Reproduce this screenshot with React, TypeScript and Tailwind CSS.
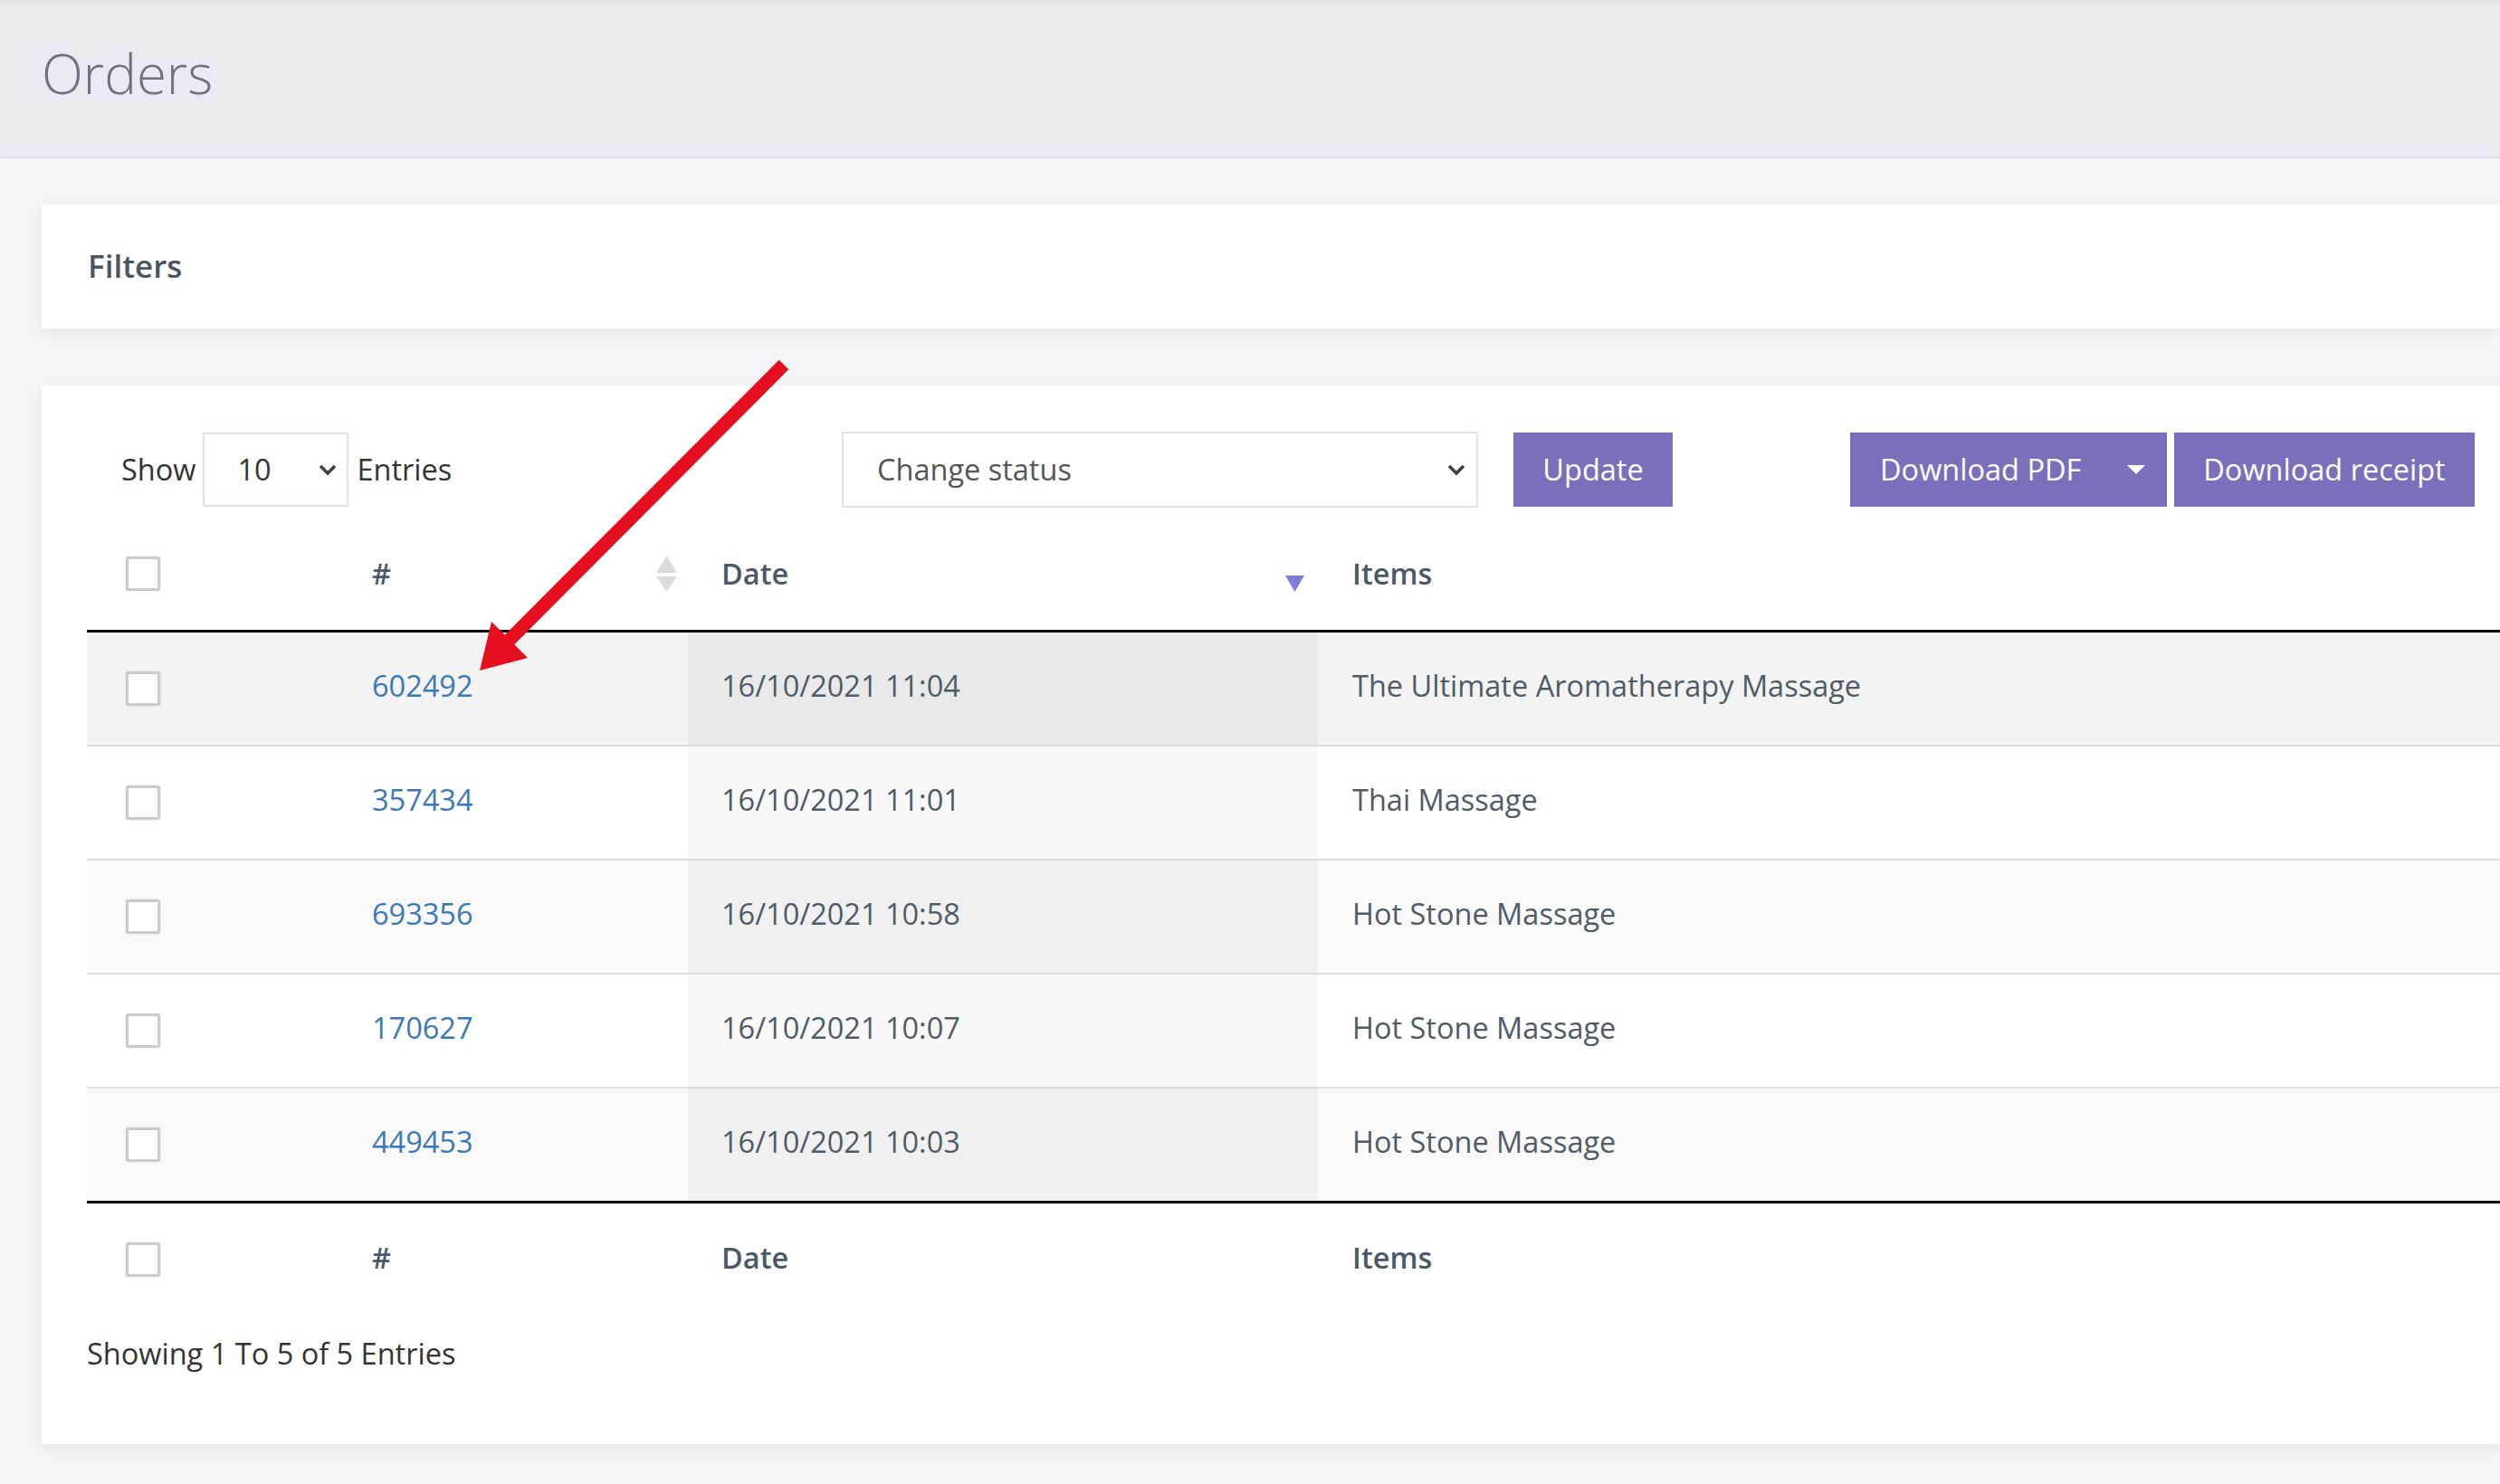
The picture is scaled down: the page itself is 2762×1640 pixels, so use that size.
import * as React from "react";

const rows = [
  { id: "602492", date: "16/10/2021 11:04", item: "The Ultimate Aromatherapy Massage", bg: "bg-[#f3f3f3]", dateBg: "bg-[#e9e9e9]" },
  { id: "357434", date: "16/10/2021 11:01", item: "Thai Massage", bg: "bg-white", dateBg: "bg-[#f8f8f8]" },
  { id: "693356", date: "16/10/2021 10:58", item: "Hot Stone Massage", bg: "bg-[#f9f9f9]", dateBg: "bg-[#f0f0f0]" },
  { id: "170627", date: "16/10/2021 10:07", item: "Hot Stone Massage", bg: "bg-white", dateBg: "bg-[#f8f8f8]" },
  { id: "449453", date: "16/10/2021 10:03", item: "Hot Stone Massage", bg: "bg-[#f9f9f9]", dateBg: "bg-[#f0f0f0]" },
];

const Checkbox = () => (
  <span className="block h-[38px] w-[38px] rounded-[3px] border-[3px] border-[#cbcbcb] bg-white shadow-[0_0_2px_rgba(0,0,0,0.18)]" />
);

const Chevron = () => (
  <svg width="22" height="14" viewBox="0 0 22 14">
    <polyline points="3,3 11,11 19,3" fill="none" stroke="#3f3f3f" strokeWidth="3.5" />
  </svg>
);

const SortBoth = () => (
  <svg width="23" height="40" viewBox="0 0 23 40">
    <path d="M11.5 0 L23 19 H0 Z" fill="#dcdcdc" />
    <path d="M0 23 H23 L11.5 40 Z" fill="#dcdcdc" />
  </svg>
);

const SortDesc = () => (
  <svg width="23" height="40" viewBox="0 0 23 40">
    <path d="M0 22 H21 L10.5 40 Z" fill="#7c7dd8" />
  </svg>
);

const cols = "grid grid-cols-[278px_386px_696px_1fr]";

export default function App() {
  return (
    <div className="relative h-[1640px] w-[2762px] overflow-hidden bg-[#f2f4f8] font-['Open_Sans',sans-serif]">
      {/* page header */}
      <div className="flex h-[175px] items-center border-b-2 border-[#dde1e7] bg-[#e8ebf0] pb-[12px] pl-[46px] shadow-[inset_0_3px_3px_rgba(0,0,0,0.04)]">
        <h1 className="text-[60px] font-light leading-none text-[#6e7379]">Orders</h1>
      </div>

      {/* filters */}
      <div className="ml-[46px] mt-[51px] flex h-[137px] items-center bg-white pl-[51px] shadow-[0_4px_14px_rgba(0,0,0,0.06)]">
        <span className="text-[35px] font-semibold text-[#4a5561]">Filters</span>
      </div>

      {/* orders table */}
      <div className="ml-[46px] mt-[63px] h-[1170px] bg-white pt-[51px] shadow-[0_4px_14px_rgba(0,0,0,0.06)]">
        <div className="flex h-[84px] items-center pl-[88px] text-[32.5px] text-[#333333]">
          <div className="flex w-[796px] items-center">
            <span>Show</span>
            <div className="ml-[7px] flex h-[82px] w-[161px] items-center justify-between border-2 border-[#dde3e5] pl-[37px] pr-[10px]">
              <span>10</span>
              <Chevron />
            </div>
            <span className="ml-[10px]">Entries</span>
          </div>
          <div className="flex h-[84px] w-[703px] items-center justify-between border-2 border-[#dde3e5] pl-[37px] pr-[11px] text-[#555555]">
            <span>Change status</span>
            <Chevron />
          </div>
          <button className="ml-[39px] h-[82px] w-[176px] bg-[#7b6fbc] text-white">Update</button>
          <button className="ml-[196px] flex h-[82px] w-[350px] items-center bg-[#7b6fbc] pl-[33px] pr-[24px] text-white">
            <span>Download PDF</span>
            <svg className="ml-auto" width="20" height="10" viewBox="0 0 20 10">
              <path d="M0 0 H20 L10 10 Z" fill="#ffffff" />
            </svg>
          </button>
          <button className="ml-[8px] h-[82px] w-[332px] bg-[#7b6fbc] text-white">Download receipt</button>
        </div>

        <div className="ml-[50px] mt-[11px] text-[32.5px]">
          {/* head */}
          <div className={`${cols} h-[127px] border-b-[3px] border-black font-semibold text-[#4b5867]`}>
            <div className="flex items-center pl-[43px]">
              <Checkbox />
            </div>
            <div className="flex items-center justify-between pl-[37px] pr-[12px]">
              <span>#</span>
              <SortBoth />
            </div>
            <div className="flex items-center justify-between pl-[37px] pr-[13px]">
              <span>Date</span>
              <SortDesc />
            </div>
            <div className="flex items-center pl-[38px]">
              <span>Items</span>
            </div>
          </div>

          {/* body */}
          {rows.map((r, i) => (
            <div
              key={r.id}
              className={`${cols} ${r.bg} ${i > 0 ? "h-[126px] border-t-2 border-[#dddddd]" : "h-[124px]"} text-[#4f5b67]`}
            >
              <div className="flex items-center pl-[43px]">
                <Checkbox />
              </div>
              <div className="flex items-center pb-[5px] pl-[37px]">
                <a className="text-[#3b78b6]">{r.id}</a>
              </div>
              <div className={`flex items-center pb-[5px] pl-[37px] ${r.dateBg}`}>{r.date}</div>
              <div className="flex items-center pb-[5px] pl-[38px]">{r.item}</div>
            </div>
          ))}

          {/* foot */}
          <div className={`${cols} h-[127px] border-t-[3px] border-black font-semibold text-[#4b5867]`}>
            <div className="flex items-center pl-[43px]">
              <Checkbox />
            </div>
            <div className="flex items-center pb-[4px] pl-[37px]">#</div>
            <div className="flex items-center pb-[4px] pl-[37px]">Date</div>
            <div className="flex items-center pb-[4px] pl-[38px]">Items</div>
          </div>
        </div>

        <div className="ml-[50px] mt-[18px] text-[32.5px] text-[#333333]">Showing 1 To 5 of 5 Entries</div>
      </div>

      {/* annotation arrow */}
      <svg className="pointer-events-none absolute left-0 top-0" width="2762" height="1640" viewBox="0 0 2762 1640">
        <line x1="866" y1="403" x2="556" y2="714" stroke="#e60f20" strokeWidth="15" />
        <polygon points="530,741 543,687 583,727" fill="#e60f20" />
      </svg>
    </div>
  );
}
